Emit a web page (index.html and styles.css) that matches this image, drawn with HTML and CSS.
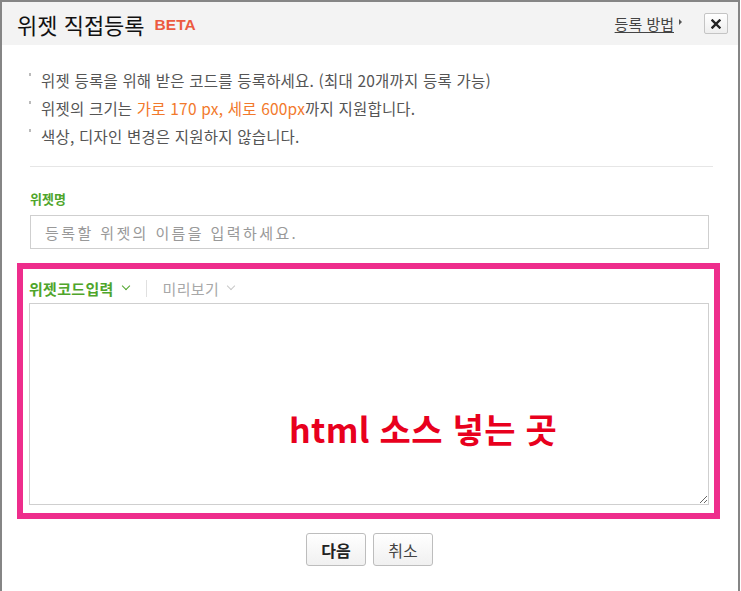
FILE: index.html
```html
<!DOCTYPE html>
<html lang="ko">
<head>
    <meta charset="utf-8">
    <link rel="stylesheet" href="styles.css">
</head>
<body>
    <div class="dialog">
        <div class="dialog-header">
            <h1 class="title">위젯 직접등록 <span class="beta">BETA</span></h1>
            <div class="header-tools">
                <a class="help-link" href="#">등록 방법</a>
                <span class="help-arrow"></span>
                <button class="close-btn" type="button" aria-label="닫기">
                    <svg width="10" height="10" viewBox="0 0 10 10">
                        <path d="M1.5 1.5 L8.5 8.5 M8.5 1.5 L1.5 8.5" stroke="#222" stroke-width="2.4" stroke-linecap="square"/>
                    </svg>
                </button>
            </div>
        </div>

        <div class="dialog-body">
            <ul class="notice">
                <li>위젯 등록을 위해 받은 코드를 등록하세요. (최대 20개까지 등록 가능)</li>
                <li>위젯의 크기는 <em>가로 170 px, 세로 600px</em>까지 지원합니다.</li>
                <li>색상, 디자인 변경은 지원하지 않습니다.</li>
            </ul>

            <div class="field-label">위젯명</div>
            <input class="name-input" type="text" placeholder="등록할 위젯의 이름을 입력하세요.">

            <div class="code-box">
                <div class="tabs">
                    <span class="tab tab-on">위젯코드입력 <i class="chev"></i></span>
                    <span class="tab-sep"></span>
                    <span class="tab">미리보기 <i class="chev"></i></span>
                </div>
                <textarea class="code-input"></textarea>
                <div class="code-hint">html 소스 넣는 곳</div>
            </div>

            <div class="actions">
                <button class="btn btn-strong" type="button">다음</button>
                <button class="btn" type="button">취소</button>
            </div>
        </div>
    </div>
</body>
</html>
```

FILE: styles.css
```css
html, body {
    margin: 0;
    height: 100%;
    overflow: hidden;
    background: #fff;
}

body {
    font-family: "Noto Sans CJK KR", "Liberation Sans", sans-serif;
    color: #333;
}

.dialog {
    width: 740px;
    height: 600px;
    box-sizing: border-box;
    border: 2px solid #858585;
    border-bottom: none;
}

.dialog-header {
    height: 43px;
    background: #f3f3f3;
    display: flex;
    align-items: center;
    justify-content: space-between;
    padding: 0 10px 0 15px;
}

.title {
    margin: 0;
    font-size: 22px;
    font-weight: normal;
    color: #111;
    line-height: 1;
    display: flex;
    align-items: center;
}

.beta {
    font-family: "Liberation Sans", sans-serif;
    font-weight: bold;
    font-size: 15.5px;
    color: #ec5a3f;
    margin-left: 10px;
    margin-top: 2px;
}

.header-tools {
    display: flex;
    align-items: center;
}

.help-link {
    font-size: 15px;
    color: #444;
    text-decoration: underline;
    text-underline-offset: 2px;
}

.help-arrow {
    width: 0;
    height: 0;
    border-left: 3px solid #555;
    border-top: 3px solid transparent;
    border-bottom: 3px solid transparent;
    margin: 0 22px 4px 5px;
}

.close-btn {
    width: 24px;
    height: 21px;
    padding: 0;
    border: 1px solid #c4c4c4;
    border-radius: 2px;
    background: linear-gradient(#fff, #eee);
    display: flex;
    align-items: center;
    justify-content: center;
}

.dialog-body {
    padding: 21px 29px 0 28px;
}

.notice {
    list-style: none;
    margin: 0 -4px 22px 0;
    padding: 0 0 16px;
    border-bottom: 1px solid #e6e6e6;
}

.notice li {
    position: relative;
    padding-left: 11px;
    font-size: 15.5px;
    line-height: 28px;
    color: #555;
    letter-spacing: 0.2px;
}

.notice li::before {
    content: "";
    position: absolute;
    left: -1px;
    top: 7px;
    width: 2px;
    height: 3px;
    background: #bbb;
}

.notice em {
    font-style: normal;
    color: #f2792b;
}

.field-label {
    font-size: 13px;
    font-weight: bold;
    color: #4fa52b;
    line-height: 20px;
}

.name-input {
    display: block;
    width: 100%;
    height: 34px;
    box-sizing: border-box;
    margin-top: 6px;
    border: 1px solid #cfcfcf;
    padding: 0 14px;
    font-family: inherit;
    font-size: 15px;
    letter-spacing: 2.4px;
    outline: none;
}

.name-input::placeholder {
    color: #999;
}

.code-box {
    position: relative;
    margin: 14px -11px 0 -13px;
    border: 6px solid #ee2d8c;
    padding: 8px 5px 8px 6px;
}

.tabs {
    display: flex;
    align-items: center;
    height: 22px;
    margin-bottom: 4px;
    font-size: 15px;
}

.tab {
    display: flex;
    align-items: center;
    color: #a8a8a8;
    letter-spacing: 0.3px;
}

.tab-on {
    color: #4fa52b;
    font-weight: bold;
}

.chev {
    width: 5px;
    height: 5px;
    border-right: 1.5px solid currentColor;
    border-bottom: 1.5px solid currentColor;
    transform: rotate(45deg);
    margin: -4px 0 0 9px;
}

.tab .chev {
    border-color: #c8c8c8;
}

.tab-on .chev {
    border-color: #4fa52b;
}

.tab-sep {
    width: 1px;
    height: 17px;
    background: #e0e0e0;
    margin: 0 16px 0 17px;
}

.code-input {
    display: block;
    width: 100%;
    height: 202px;
    box-sizing: border-box;
    border: 1px solid #cfcfcf;
    margin: 0;
    resize: both;
    outline: none;
}

.code-hint {
    position: absolute;
    left: 266px;
    top: 143px;
    font-size: 34px;
    font-weight: bold;
    line-height: 1;
    color: #e8001d;
    letter-spacing: 0.3px;
}

.actions {
    display: flex;
    justify-content: center;
    gap: 7px;
    margin-top: 14px;
}

.btn {
    width: 60px;
    height: 33px;
    padding: 0;
    border: 1px solid #bdbdbd;
    border-radius: 3px;
    background: linear-gradient(#fff, #f0f0f0);
    font-family: inherit;
    font-size: 16px;
    color: #444;
}

.btn-strong {
    font-weight: bold;
    color: #222;
}
```
